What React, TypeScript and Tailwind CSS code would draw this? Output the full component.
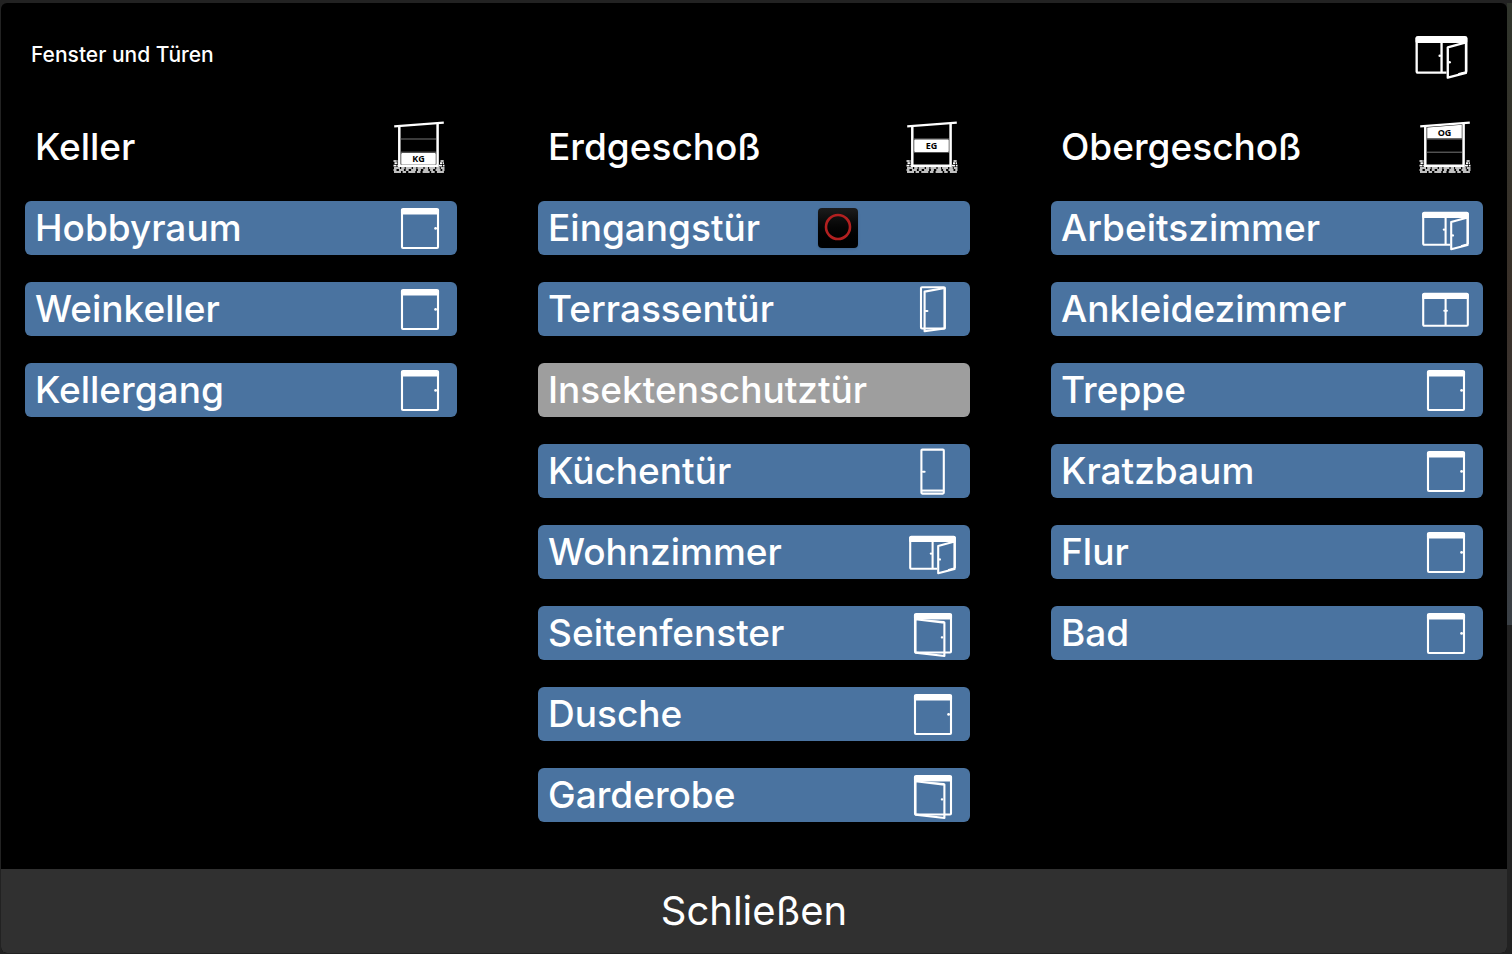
import {ReactNode, useState} from "react";

type IconName = "window" | "windowOpen" | "double" | "doubleOpen" | "door" | "doorOpen" | "led" | "none";
type FloorName = "KG" | "EG" | "OG";

interface Room {
    name: string;
    icon: IconName;
}

interface Floor {
    title: string;
    code: FloorName;
    rooms: Room[];
}

const floors: Floor[] = [
    {
        title: "Keller",
        code: "KG",
        rooms: [
            {name: "Hobbyraum", icon: "window"},
            {name: "Weinkeller", icon: "window"},
            {name: "Kellergang", icon: "window"},
        ],
    },
    {
        title: "Erdgeschoß",
        code: "EG",
        rooms: [
            {name: "Eingangstür", icon: "led"},
            {name: "Terrassentür", icon: "doorOpen"},
            {name: "Insektenschutztür", icon: "none"},
            {name: "Küchentür", icon: "door"},
            {name: "Wohnzimmer", icon: "doubleOpen"},
            {name: "Seitenfenster", icon: "windowOpen"},
            {name: "Dusche", icon: "window"},
            {name: "Garderobe", icon: "windowOpen"},
        ],
    },
    {
        title: "Obergeschoß",
        code: "OG",
        rooms: [
            {name: "Arbeitszimmer", icon: "doubleOpen"},
            {name: "Ankleidezimmer", icon: "double"},
            {name: "Treppe", icon: "window"},
            {name: "Kratzbaum", icon: "window"},
            {name: "Flur", icon: "window"},
            {name: "Bad", icon: "window"},
        ],
    },
];

const drawings: Record<"window" | "windowOpen" | "double" | "doubleOpen" | "door" | "doorOpen", ReactNode> = {
    window: (
        <>
            <rect x="9" y="8" width="36" height="39" rx="1"/>
            <path d="M9 9h36v3.5H9z" fill="white"/>
            <circle cx="42.6" cy="27.4" r="1.4" fill="white" stroke="none"/>
        </>
    ),
    windowOpen: (
        <>
            <rect x="9" y="8" width="36" height="38.5" rx="1"/>
            <path d="M9 9h36v3.5H9z" fill="white"/>
            <path d="M9.5 13.2 38.4 16.6V50L9.5 46.6z"/>
            <path d="M9.5 13.2 38.4 15V17z" fill="white" stroke="none"/>
            <path d="M36.2 31.4h-.4" strokeLinecap="round"/>
        </>
    ),
    double: (
        <>
            <rect x="4.2" y="11.8" width="44.6" height="32" rx="1"/>
            <path d="M4.2 12.8h44.6v3.2H4.2z" fill="white"/>
            <path d="M26.6 16v28"/>
            <path d="M25.3 28.8h2.6" strokeLinecap="round"/>
        </>
    ),
    doubleOpen: (
        <>
            <path d="M31 43.8H5.2a1 1 0 0 1-1-1V12.8a1 1 0 0 1 1-1h42.6a1 1 0 0 1 1 1V43"/>
            <path d="M4.2 12.8h44.6v3.2H4.2z" fill="white"/>
            <path d="M26.6 16v28"/>
            <path d="M48.6 16.6 32.2 21V48.3l16.4-4.4z"/>
            <path d="M42 44.6l6.5-1.7v1.5z" fill="white" strokeWidth="1"/>
            <circle cx="25" cy="28.6" r="1.2" fill="white" stroke="none"/>
            <circle cx="33.8" cy="34.4" r="1.2" fill="white" stroke="none"/>
        </>
    ),
    door: (
        <>
            <rect x="15.4" y="5.6" width="22.4" height="44" rx="1"/>
            <path d="M15.4 46.6h22.4"/>
            <path d="M17 27.7h1.6" strokeLinecap="round"/>
        </>
    ),
    doorOpen: (
        <>
            <rect x="15" y="5.3" width="23.8" height="41.2" rx="1"/>
            <path d="M38.6 6 18.6 9.6V49.3l20-2.8z"/>
            <path d="M19.8 29h1.6" strokeLinecap="round"/>
        </>
    ),
};

const StateIcon = ({name, className}: { name: IconName, className: string }) => {
    if (name === "none") return null;

    if (name === "led") {
        return (
            <span
                className="mr-[102px] flex size-10 shrink-0 items-center justify-center rounded-sm bg-linear-to-b from-[#1c1c1c] to-black shadow">
                <svg viewBox="0 0 40 40" className="size-10" fill="none">
                    <circle cx="20" cy="19" r="12" stroke="#b22020" strokeWidth="2.6"/>
                </svg>
            </span>
        );
    }

    return (
        <svg viewBox="0 0 54 54" className={className} fill="none" stroke="white" strokeWidth="2.1"
             strokeLinejoin="round">
            {drawings[name]}
        </svg>
    );
}

const FloorIcon = ({code}: { code: FloorName }) => {
    const labelY = {KG: 42.4, EG: 29, OG: 15.8}[code];

    return (
        <svg viewBox="0 0 54 54" className="size-[54px] shrink-0" fill="none" stroke="white">
            {/* ground */}
            <path d="M.5 41H5M47.5 41h4" strokeWidth="1.6" strokeDasharray="3.2 .8"/>
            <path d="M1.5 43.2H5M47 43.2h4" strokeWidth="1.8" strokeDasharray="2.4 .7"/>
            <path d="M.5 45.6h5M46 45.6h5.5" strokeWidth="1.8" strokeDasharray="3 .8"/>
            <path d="M1 48h50.5" strokeWidth="1.7" strokeDasharray="6 1.2 3.5 1"/>
            <path d="M.5 50h51" strokeWidth="1.6" strokeDasharray="3 2.4 5 1.8"/>
            <path d="M1 51.9h50.5" strokeWidth="1.5" strokeDasharray="7 1.6 3.5 2.2"/>
            {/* walls and roof */}
            <path d="M6.3 6v39.8h38.3V4" strokeWidth="2.5"/>
            <path d="M1.2 6.4 50.8 2.6" strokeWidth="2.3"/>
            <path d="M7.5 19H43M7.5 32.2H43" stroke="#777" strokeWidth="1"/>
            {code === "KG" && <rect x="8.2" y="33" width="34.6" height="11.4" rx="1" fill="white" stroke="none"/>}
            {code === "EG" && <rect x="8.2" y="19.5" width="34.6" height="12.4" rx="1" fill="white" stroke="none"/>}
            {code === "OG" && <path d="M8.2 7.5 42.8 4.7V18.3H8.2z" fill="white" stroke="none"/>}
            <text x="25.5" y={labelY} textAnchor="middle" fill="black" stroke="none"
                  className="font-['Open_Sans'] text-[9px] font-bold">{code}</text>
        </svg>
    );
}

const RoomButton = ({room}: { room: Room }) => {
    return (
        <button
            type="button"
            className={`flex h-[54px] w-full items-center justify-between rounded-md px-2.5 text-left ${room.icon === "none" ? "bg-[#9e9e9e]" : "bg-[#4a73a0]"}`}>
            <span>{room.name}</span>
            <StateIcon name={room.icon} className="size-[54px] shrink-0"/>
        </button>
    );
}

export default function App() {
    const [open, setOpen] = useState<boolean>(true);

    return (
        <div
            className="flex min-h-screen bg-[#222222] pt-[3px] pb-px pl-px font-[Inter,sans-serif] text-[37px] leading-[56px] font-medium text-white">
            {open &&
                <div role="dialog" aria-labelledby="popup-title"
                     className="flex grow flex-col overflow-hidden rounded-md bg-black">
                    <header className="flex items-start justify-between pt-[21px] pr-[35px] pl-[30px]">
                        <h1 id="popup-title" className="text-[21px] leading-[62px]">Fenster und Türen</h1>
                        <StateIcon name="doubleOpen" className="size-[60px] shrink-0"/>
                    </header>
                    <main className="grid grow grid-cols-3 items-start gap-[81px] px-6 pt-[34px] pb-[47px]">
                        {floors.map(floor => (
                            <section key={floor.code} className="flex flex-col gap-[27px]">
                                <div className="flex h-[54px] items-center justify-between px-2.5">
                                    <h2>{floor.title}</h2>
                                    <FloorIcon code={floor.code}/>
                                </div>
                                {floor.rooms.map(room => (
                                    <RoomButton key={room.name} room={room}/>
                                ))}
                            </section>
                        ))}
                    </main>
                    <button type="button" onClick={() => setOpen(false)}
                            className="h-[84px] bg-[#303030] text-[40px] font-normal">
                        Schließen
                    </button>
                </div>
            }
            {/* edge of the page behind the popup */}
            <div
                className="h-[622px] w-[5px] shrink-0 bg-linear-to-b from-[#30352c] via-[#3a3029] to-[#3a4046]"/>
        </div>
    )
}
